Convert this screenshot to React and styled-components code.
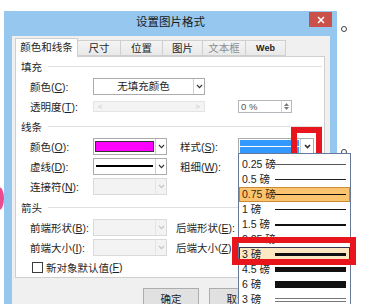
import React from 'react';
import styled, { createGlobalStyle } from 'styled-components';

const GlobalStyle = createGlobalStyle`
  html, body { margin: 0; padding: 0; background: #fff; }
  body {
    font-family: "Liberation Sans", "Noto Sans CJK SC", sans-serif;
    font-size: 10.5px;
    color: #1e1e1e;
  }
  * { box-sizing: border-box; }
`;

const Stage = styled.div`
  position: relative;
  width: 384px;
  height: 304px;
  overflow: hidden;
  background: #fff;
`;

const Dialog = styled.div`
  margin: 11px 0 0 4px;
  width: 333px;
  height: 300px;
  background: #95c7ef;
  display: flex;
  flex-direction: column;
`;

const TitleBar = styled.div`
  height: 25px;
  display: flex;
  align-items: flex-start;
  padding-right: 5px;
`;

const Title = styled.div`
  flex: 1;
  padding-left: 28px;
  text-align: center;
  font-size: 11.5px;
  line-height: 23px;
  color: #1a1a1a;
`;

const CloseButton = styled.div`
  width: 23px;
  height: 15px;
  margin-top: 1px;
  background: #c9504b;
  display: flex;
  align-items: center;
  justify-content: center;
`;

const Body = styled.div`
  flex: 1;
  margin: 0 7px 0 8px;
  background: #f0f0f0;
  padding: 2px 5px 0 3px;
  display: flex;
  flex-direction: column;
`;

const Tabs = styled.div`
  display: flex;
  align-items: flex-end;
  height: 18px;
`;

const Tab = styled.div`
  position: relative;
  width: ${(p) => p.$w}px;
  height: ${(p) => (p.$active ? 19 : 16)}px;
  margin-right: -1px;
  margin-bottom: ${(p) => (p.$active ? -1 : 0)}px;
  border: 1px solid #cfcfcf;
  border-bottom: ${(p) => (p.$active ? 'none' : '1px solid #cfcfcf')};
  background: ${(p) => (p.$active ? '#fff' : 'linear-gradient(#f4f4f4, #e9e9e9)')};
  z-index: ${(p) => (p.$active ? 2 : 1)};
  color: ${(p) => (p.$disabled ? '#8d8d8d' : '#1e1e1e')};
  font-size: ${(p) => (p.$web ? '9px' : 'inherit')};
  font-weight: ${(p) => (p.$web ? 700 : 400)};
  text-align: center;
  line-height: ${(p) => (p.$active ? 16 : 14)}px;
`;

const Panel = styled.div`
  position: relative;
  z-index: 1;
  height: 222px;
  border: 1px solid #cfcfcf;
  background: #fff;
  display: flex;
  flex-direction: column;
`;

const Section = styled.div`
  display: flex;
  align-items: center;
  height: 20px;
  margin-top: ${(p) => p.$offset || 0}px;
  padding: 0 2px 0 5px;
  &::after {
    content: '';
    flex: 1;
    height: 1px;
    margin-left: 6px;
    background: #e0e0e0;
  }
`;

const Row = styled.div`
  display: flex;
  align-items: center;
  height: 20px;
  padding-left: ${(p) => p.$indent || 14}px;
  white-space: nowrap;
`;

const Label = styled.div`
  width: 63px;
  flex-shrink: 0;
`;

const SideLabel = styled.div`
  margin-left: ${(p) => p.$gap}px;
  width: ${(p) => p.$w}px;
  flex-shrink: 0;
`;

const Combo = styled.div`
  width: ${(p) => p.$w}px;
  height: 17px;
  flex-shrink: 0;
  margin-left: ${(p) => p.$gap || 0}px;
  border: 1px solid ${(p) => (p.$disabled ? '#dadada' : '#acacac')};
  background: ${(p) => (p.$disabled ? '#f3f3f3' : '#fff')};
  display: flex;
`;

const ComboBody = styled.div`
  flex: 1;
  display: flex;
  align-items: center;
  justify-content: center;
  padding: 1px;
  line-height: 13px;
`;

const ComboArrow = styled.div`
  width: ${(p) => p.$w || 11}px;
  display: flex;
  align-items: center;
  justify-content: center;
  border-left: 1px solid ${(p) => (p.$disabled ? '#e4e4e4' : '#cfcfcf')};
  color: ${(p) => (p.$disabled ? '#c4c4c4' : '#333')};
  background: ${(p) => (p.$disabled ? '#f3f3f3' : '#fff')};
`;

const Swatch = styled.div`
  width: 100%;
  height: 11px;
  border: 1px solid #333;
  background: #ff00ff;
`;

const DashLine = styled.div`
  width: 100%;
  height: 2px;
  margin: 0 1px;
  background: #000;
`;

const Selected = styled.div`
  width: 100%;
  height: 100%;
  background: #3399ff;
  display: flex;
  align-items: center;
  &::after {
    content: '';
    flex: 1;
    height: 1px;
    background: #fff;
  }
`;

const Slider = styled.div`
  width: 112px;
  height: 11px;
  flex-shrink: 0;
  border: 1px solid #e4e4e4;
  background: #f4f4f4;
  display: flex;
  align-items: center;
  justify-content: space-between;
  padding: 0 4px;
  color: #c9c9c9;
  font-size: 8px;
  line-height: 9px;
`;

const Percent = styled.div`
  margin-left: 33px;
  width: 54px;
  height: 13px;
  border: 1px solid #b5b7bd;
  background: #fff;
  display: flex;
  color: #555;
  font-size: 9.5px;
  line-height: 11px;
`;

const PercentText = styled.div`
  flex: 1;
  padding-left: 2px;
`;

const Spin = styled.div`
  width: 10px;
  border-left: 1px solid #d6d6d6;
  display: flex;
  flex-direction: column;
  align-items: center;
  justify-content: center;
  gap: 1px;
  color: #777;
`;

const CheckBox = styled.div`
  width: 11px;
  height: 11px;
  margin-right: 3px;
  border: 1px solid #3c3c3c;
  background: #fff;
`;

const Buttons = styled.div`
  display: flex;
  gap: 10px;
  margin-top: 10px;
  padding-left: 128px;
`;

const Button = styled.div`
  width: 56px;
  height: 22px;
  border: 1px solid #adadad;
  background: #e1e1e1;
  text-align: center;
  line-height: 20px;
`;

const DropList = styled.div`
  position: absolute;
  left: 238px;
  top: 153px;
  width: 113px;
  height: 170px;
  padding-top: 3px;
  border: 1px solid #66789a;
  background: #fff;
  z-index: 3;
`;

const Item = styled.div`
  display: grid;
  grid-template-columns: 33px 1fr;
  align-items: center;
  height: 15px;
  padding: 0 2px 0 2px;
  border: 1px solid ${(p) => (p.$tone === 'hover' ? '#c98b33' : p.$tone === 'pick' ? '#34344e' : 'transparent')};
  background: ${(p) => (p.$tone === 'hover' ? '#fcc46e' : p.$tone === 'pick' ? '#fde8c2' : 'transparent')};
  color: ${(p) => (p.$tone === 'hover' ? '#3a2a10' : '#222')};
  line-height: 13px;
  white-space: nowrap;
`;

const Stroke = styled.div`
  height: ${(p) => p.$h}px;
  background: ${(p) => p.$color || '#111'};
  border-top: ${(p) => (p.$double ? '1.5px solid #777' : 'none')};
  border-bottom: ${(p) => (p.$double ? '1.5px solid #777' : 'none')};
  margin-right: 1px;
`;

const RedMark = styled.div`
  position: absolute;
  left: ${(p) => p.$x}px;
  top: ${(p) => p.$y}px;
  width: ${(p) => p.$w}px;
  height: ${(p) => p.$h}px;
  border: 6px solid #e8151d;
  z-index: ${(p) => p.$z};
`;

const Handle = styled.div`
  position: absolute;
  left: ${(p) => p.$x}px;
  top: ${(p) => p.$y}px;
  width: 6px;
  height: 6px;
  border: 1px solid #444;
  border-radius: 50%;
  background: #fff;
  z-index: 2;
`;

const PinkShape = styled.div`
  position: absolute;
  left: -6px;
  top: 187px;
  width: 10px;
  height: 23px;
  border-radius: 50%;
  background: #ec4b8d;
`;

const Chevron = ({ bold }) => (
  <svg width="7" height="5" viewBox="0 0 7 5">
    <polyline points="1,1 3.5,3.6 6,1" fill="none" stroke="currentColor" strokeWidth={bold ? 1.7 : 1.1} />
  </svg>
);

const CloseIcon = () => (
  <svg width="8" height="8" viewBox="0 0 8 8">
    <path d="M1 1 L7 7 M7 1 L1 7" stroke="#fff" strokeWidth="1.5" />
  </svg>
);

const tabs = [
  { label: '颜色和线条', w: 63, active: true },
  { label: '尺寸', w: 44 },
  { label: '位置', w: 43 },
  { label: '图片', w: 41 },
  { label: '文本框', w: 44, disabled: true },
  { label: 'Web', w: 41, web: true },
];

const weights = [
  { label: '0.25 磅', h: 1, color: '#555' },
  { label: '0.5 磅', h: 1, color: '#222' },
  { label: '0.75 磅', h: 1, tone: 'hover' },
  { label: '1 磅', h: 1.5 },
  { label: '1.5 磅', h: 2 },
  { label: '2.25 磅', h: 2.5 },
  { label: '3 磅', h: 3, tone: 'pick' },
  { label: '4.5 磅', h: 5 },
  { label: '6 磅', h: 7 },
  { label: '3 磅', h: 4, double: true, color: '#fff' },
];

const Acc = ({ text, k, colon = true }) => (
  <>
    {text}(<u>{k}</u>){colon ? ':' : ''}
  </>
);

export default function App() {
  return (
    <Stage>
      <GlobalStyle />
      <PinkShape />
      <Handle $x={341} $y={26} />
      <Handle $x={341} $y={149} />
      <Dialog>
        <TitleBar>
          <Title>设置图片格式</Title>
          <CloseButton>
            <CloseIcon />
          </CloseButton>
        </TitleBar>
        <Body>
          <Tabs>
            {tabs.map((t) => (
              <Tab key={t.label} $w={t.w} $active={t.active} $disabled={t.disabled} $web={t.web}>
                {t.label}
              </Tab>
            ))}
          </Tabs>
          <Panel>
            <Section $offset={-1}>填充</Section>
            <Row>
              <Label><Acc text="颜色" k="C" /></Label>
              <Combo $w={112}>
                <ComboBody>无填充颜色</ComboBody>
                <ComboArrow><Chevron /></ComboArrow>
              </Combo>
            </Row>
            <Row>
              <Label><Acc text="透明度" k="T" /></Label>
              <Slider><span>&lt;</span><span>&gt;</span></Slider>
              <Percent>
                <PercentText>0 %</PercentText>
                <Spin>
                  <svg width="5" height="3" viewBox="0 0 5 3"><polygon points="0,3 2.5,0 5,3" fill="currentColor" /></svg>
                  <svg width="5" height="3" viewBox="0 0 5 3"><polygon points="0,0 2.5,3 5,0" fill="currentColor" /></svg>
                </Spin>
              </Percent>
            </Row>
            <Section>线条</Section>
            <Row>
              <Label><Acc text="颜色" k="O" /></Label>
              <Combo $w={74}>
                <ComboBody><Swatch /></ComboBody>
                <ComboArrow><Chevron /></ComboArrow>
              </Combo>
              <SideLabel $gap={13} $w={58}><Acc text="样式" k="S" /></SideLabel>
              <Combo $w={76}>
                <ComboBody><Selected /></ComboBody>
                <ComboArrow $w={13}><Chevron bold /></ComboArrow>
              </Combo>
            </Row>
            <Row>
              <Label><Acc text="虚线" k="D" /></Label>
              <Combo $w={74}>
                <ComboBody><DashLine /></ComboBody>
                <ComboArrow><Chevron /></ComboArrow>
              </Combo>
              <SideLabel $gap={13} $w={58}><Acc text="粗细" k="W" /></SideLabel>
            </Row>
            <Row>
              <Label><Acc text="连接符" k="N" /></Label>
              <Combo $w={74} $disabled>
                <ComboBody />
                <ComboArrow $disabled><Chevron /></ComboArrow>
              </Combo>
            </Row>
            <Section $offset={1}>箭头</Section>
            <Row>
              <Label><Acc text="前端形状" k="B" /></Label>
              <Combo $w={74} $disabled>
                <ComboBody />
                <ComboArrow $disabled><Chevron /></ComboArrow>
              </Combo>
              <SideLabel $gap={9} $w={62}><Acc text="后端形状" k="E" /></SideLabel>
            </Row>
            <Row>
              <Label><Acc text="前端大小" k="I" /></Label>
              <Combo $w={74} $disabled>
                <ComboBody />
                <ComboArrow $disabled><Chevron /></ComboArrow>
              </Combo>
              <SideLabel $gap={9} $w={62}><Acc text="后端大小" k="Z" /></SideLabel>
            </Row>
            <Row $indent={16}>
              <CheckBox />
              <Acc text="新对象默认值" k="F" colon={false} />
            </Row>
          </Panel>
          <Buttons>
            <Button>确定</Button>
            <Button>取消</Button>
          </Buttons>
        </Body>
      </Dialog>
      <RedMark $x={291} $y={127} $w={31} $h={32} $z={2} />
      <DropList>
        {weights.map((w, i) => (
          <Item key={i} $tone={w.tone}>
            <span>{w.label}</span>
            <Stroke $h={w.h} $color={w.color} $double={w.double} />
          </Item>
        ))}
      </DropList>
      <RedMark $x={232} $y={237} $w={124} $h={28} $z={4} />
    </Stage>
  );
}
